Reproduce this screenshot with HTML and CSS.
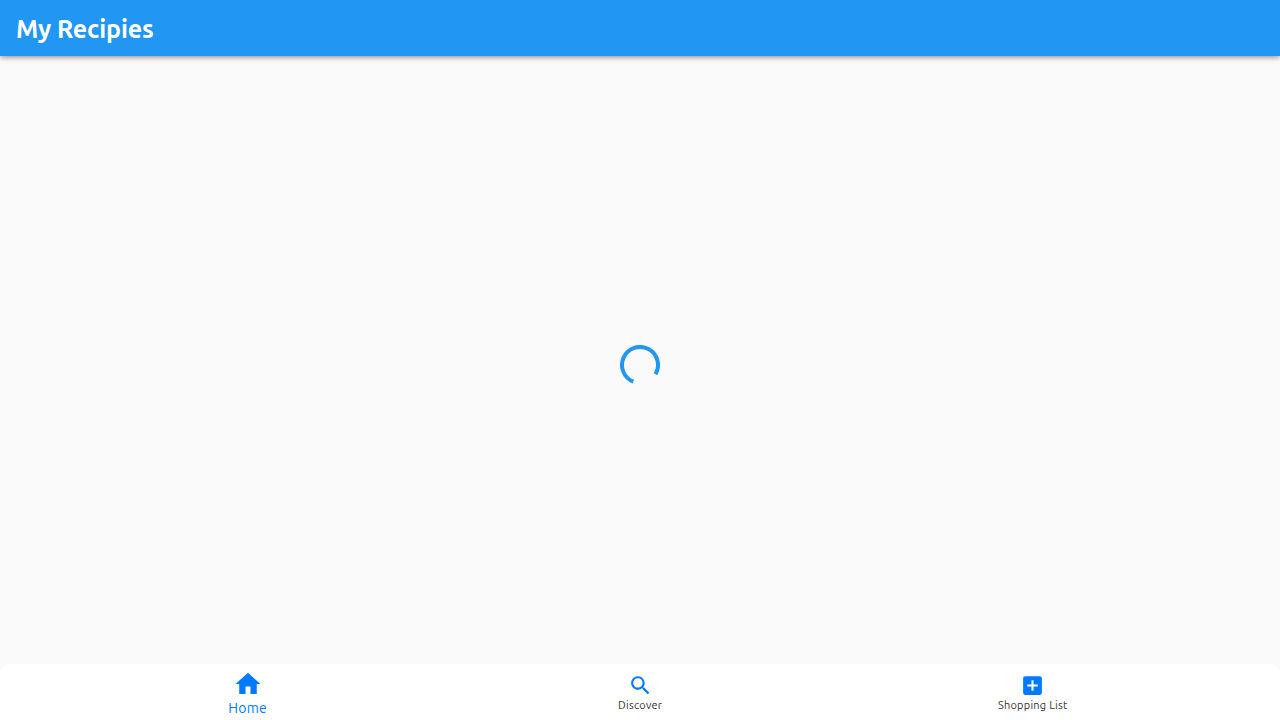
FILE: index.html
```html
<!DOCTYPE html>
<html lang="en">
<head>
<meta charset="utf-8">
<title>My Recipies</title>
<link rel="stylesheet" href="styles.css">
</head>
<body>
<header class="app-bar"><h1 class="title">My Recipies</h1></header>
<main class="content">
  <svg class="spinner" viewBox="-20 -20 40 40" role="img" aria-label="Loading"><path d="M-6.7 16.7A18 18 0 1 1 15.5 9.2"/></svg>
</main>
<nav class="tabs">
  <a class="tab active"><svg class="icon" viewBox="0 0 24 24"><path d="M10 20v-6h4v6h5v-8h3L12 3 2 12h3v8z"/></svg><span class="label">Home</span></a>
  <a class="tab"><svg class="icon" viewBox="0 0 24 24"><path d="M15.5 14h-.79l-.28-.27C15.41 12.59 16 11.11 16 9.5 16 5.91 13.09 3 9.5 3S3 5.91 3 9.5 5.91 16 9.5 16c1.61 0 3.09-.59 4.23-1.57l.27.28v.79l5 4.99L20.49 19l-4.99-5zm-6 0C7.01 14 5 11.99 5 9.5S7.01 5 9.5 5 14 7.01 14 9.5 11.99 14 9.5 14z"/></svg><span class="label">Discover</span></a>
  <a class="tab"><svg class="icon" viewBox="0 0 24 24"><path d="M19 3H5c-1.11 0-2 .9-2 2v14c0 1.1.89 2 2 2h14c1.1 0 2-.9 2-2V5c0-1.1-.9-2-2-2zm-2 10h-4v4h-2v-4H7v-2h4V7h2v4h4v2z"/></svg><span class="label">Shopping List</span></a>
</nav>
</body>
</html>
```
FILE: styles.css
```css
* { box-sizing: border-box; }
body {
  margin: 0;
  height: 100vh;
  display: flex;
  flex-direction: column;
  overflow: hidden;
  background: #fafafa;
  font-family: Ubuntu, "Noto Sans", "Open Sans", sans-serif;
}
.app-bar {
  height: 56px;
  flex: none;
  display: flex;
  align-items: center;
  padding: 2px 16px 0;
  background: #2196f3;
  box-shadow: 0 2px 4px -1px rgba(0,0,0,.2), 0 3px 5px rgba(0,0,0,.14), 0 1px 6px rgba(0,0,0,.1);
}
.title {
  margin: 0;
  color: #fff;
  font-size: 25px;
  line-height: 30px;
  font-weight: 600;
  letter-spacing: -.13px;
  white-space: nowrap;
}
.content {
  flex: 1;
  display: flex;
  align-items: center;
  justify-content: center;
  padding-top: 10px;
}
.spinner { width: 40px; height: 40px; fill: none; stroke: #2196f3; stroke-width: 4; }
.tabs {
  height: 56px;
  flex: none;
  display: flex;
  padding: 0 51px;
  background: #fff;
  border-radius: 10px 10px 0 0;
}
.tab {
  flex: 1;
  display: flex;
  flex-direction: column;
  align-items: center;
  padding-top: 9px;
  color: #333;
}
.icon { width: 25px; height: 25px; fill: #007aff; flex: none; }
.label { font-size: 11px; line-height: 14px; letter-spacing: .24px; white-space: nowrap; }
.tab.active { padding: 4.5px 0 0 .3px; color: #007aff; }
.active .icon { width: 30px; height: 30px; }
.active .label { font-size: 14px; line-height: 19px; letter-spacing: .25px; }
```
